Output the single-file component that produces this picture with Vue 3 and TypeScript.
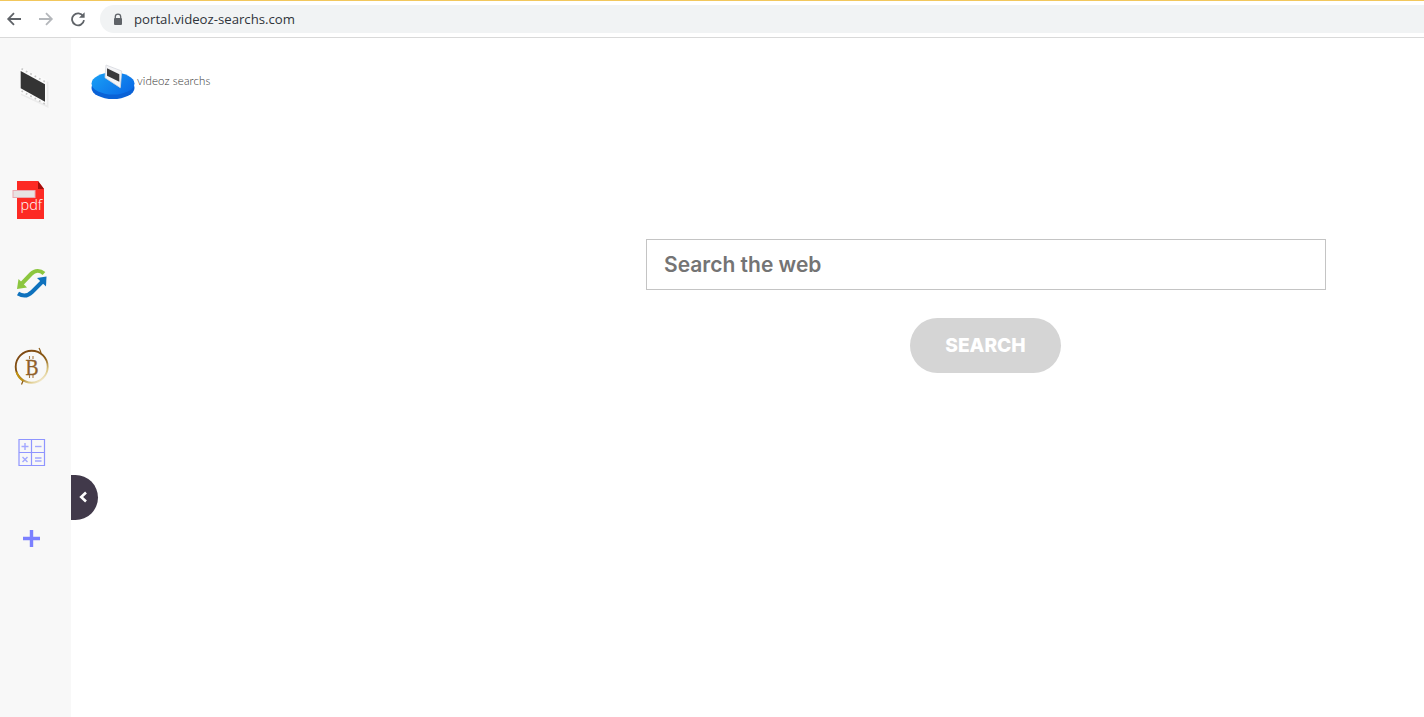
<script setup lang="ts">
import { ref } from 'vue'

const query = ref('')
const calcLines = [
  'M25 443v7M21.500 446.500h7',
  'M35 446.500h6.500',
  'M22.500 457l5 5M27.500 457l-5 5',
  'M35 458h6.500M35 461h6.500',
]
</script>

<template>
  <div class="page">
    <header class="toolbar">
      <button class="nav" aria-label="Back">
        <svg width="16" height="16" viewBox="0 0 16 16"><path d="M15 8H2.500M8 2.200 2.200 8 8 13.800" fill="none" stroke="#5f6368" stroke-width="1.800" /></svg>
      </button>
      <button class="nav" aria-label="Forward">
        <svg width="16" height="16" viewBox="0 0 16 16"><path d="M1 8h12.500M8 2.200 13.800 8 8 13.800" fill="none" stroke="#b4b7bb" stroke-width="1.800" /></svg>
      </button>
      <button class="nav" aria-label="Reload">
        <svg width="16" height="16" viewBox="0 0 16 16"><path d="M13.200 5.200A6 6 0 1 0 14 9.200" fill="none" stroke="#5f6368" stroke-width="1.800" /><path d="M14.600 1.200v5.600H9z" fill="#5f6368" /></svg>
      </button>
      <div class="address">
        <svg width="10" height="13" viewBox="0 0 10 13"><path d="M2.300 5.500V3.800a2.700 2.700 0 0 1 5.400 0v1.700" fill="none" stroke="#5f6368" stroke-width="1.300" /><rect x="1" y="5" width="8" height="7" rx="1" fill="#5f6368" /></svg>
        <span class="url">portal.videoz-searchs.com</span>
      </div>
    </header>

    <div class="body">
      <aside class="sidebar">
        <!-- film strip -->
        <svg class="app film" width="32" height="46" viewBox="18 64 32 46">
          <path d="M21 68 48.500 82v26L21 95z" fill="#ebebeb" />
          <path d="M20 66.700 46.700 80v25L20 93z" fill="#fbfbfb" />
          <path d="M20.700 71 45 84.300v17.400L20.700 88.300z" fill="#343434" />
          <path d="M21.500 68.800 45 81.700M21.500 91 45 104" stroke="#c6c6c6" stroke-width="1.700" stroke-dasharray="1.700 3.300" fill="none" />
        </svg>
        <!-- pdf -->
        <svg class="app pdf" width="36" height="40" viewBox="11 180 36 40">
          <path d="M17 181h21l6 8v30H17z" fill="#fd2a24" />
          <path d="M38 181l6 8h-6z" fill="#a30f0d" />
          <rect x="13" y="190.500" width="22" height="7" fill="#e7e3e3" stroke="#e9aab2" />
          <text x="20.500" y="210" class="pdf-text">pdf</text>
        </svg>
        <!-- exchange arrows -->
        <svg class="app swap" width="32" height="32" viewBox="16 267 32 32">
          <path d="M20.500 285 31 274c4-4 9-4 13-.5" fill="none" stroke="#8cc63f" stroke-width="4" />
          <path d="M17 289l1.500-10 8.500 8.500z" fill="#8cc63f" />
          <path d="M43 281 32 292c-4 4-9 4.500-14 1.500" fill="none" stroke="#0f72bd" stroke-width="4" />
          <path d="M46.500 276.500 46 286.500 37 278z" fill="#0f72bd" />
        </svg>
        <!-- coin -->
        <svg class="app coin" width="36" height="40" viewBox="14 347 36 40">
          <defs>
            <linearGradient id="coinRing" x1="0" y1="0" x2="0.700" y2="1">
              <stop offset="0" stop-color="#7a4312" />
              <stop offset="0.6" stop-color="#8a5a14" />
              <stop offset="0.85" stop-color="#d8c27a" />
              <stop offset="1" stop-color="#f1e7c8" />
            </linearGradient>
          </defs>
          <circle cx="31.700" cy="366.700" r="16" fill="none" stroke="url(#coinRing)" stroke-width="1.900" />
          <path d="M16.500 372a16 16 0 0 0 7 9" fill="none" stroke="#c29412" stroke-width="1.900" />
          <path d="M39 348c1 1.500 1.500 3 2 5M23 381l-1.500 3.500" fill="none" stroke="#8a5a14" stroke-width="1.200" />
          <text class="coin-text" transform="translate(32 375) scale(.85 1)">B</text>
          <path d="M29.500 356v3M33 356v3M29.500 375v3M33 375v3" stroke="#a87a44" stroke-width="1.100" />
        </svg>
        <!-- calculator -->
        <svg class="app calc" width="28" height="28" viewBox="18 439 28 28">
          <path d="M19 439.500h25.500v26H19zM31.500 439.500v26M19 452.500h25.500" fill="none" stroke="#8f95ff" stroke-width="1.200" />
          <path v-for="d in calcLines" :key="d" :d="d" fill="none" stroke="#a3a8ff" stroke-width="1.400" />
        </svg>
        <button class="add" aria-label="Add">
          <svg width="17" height="17" viewBox="0 0 17 17"><path d="M8.500 0v17M0 8.500h17" stroke="#7b80ff" stroke-width="3.400" /></svg>
        </button>
        <button class="collapse" aria-label="Collapse">
          <svg width="9" height="12" viewBox="0 0 9 12"><path d="M7 1.500 2.200 6 7 10.500" fill="none" stroke="#fff" stroke-width="2.600" /></svg>
        </button>
      </aside>

      <main class="main">
        <div class="logo">
          <svg width="47" height="38" viewBox="89 62 47 38">
            <defs>
              <linearGradient id="disc" x1="0" y1="0" x2="1" y2="0.600">
                <stop offset="0" stop-color="#1aa2f6" />
                <stop offset="1" stop-color="#0b6fe8" />
              </linearGradient>
            </defs>
            <ellipse cx="112" cy="88" rx="21.500" ry="11" fill="#0a62d6" />
            <ellipse cx="112" cy="83.500" rx="21.500" ry="11" fill="url(#disc)" />
            <path d="M105 65l15.700 6-1.400 16.700L104 77.700z" fill="#f4f4f6" stroke="#d6d8de" stroke-width="0.800" />
            <path d="M106 68.300l12.300 6v7.400L106 75.700z" fill="#3a3a3c" />
          </svg>
          <span class="brand">videoz searchs</span>
        </div>

        <form class="search" @submit.prevent>
          <input v-model="query" class="field" type="text" placeholder="Search the web" />
          <button class="go" type="submit">SEARCH</button>
        </form>
      </main>
    </div>
  </div>
</template>

<style>
html,
body {
  margin: 0;
  background: #fff;
}
</style>

<style scoped>
.page {
  height: 717px;
  display: flex;
  flex-direction: column;
  overflow: hidden;
  font-family: "Inter", "Liberation Sans", sans-serif;
}
.toolbar {
  height: 36px;
  flex: none;
  display: flex;
  align-items: center;
  border-top: 1px solid #f2c75c;
  border-bottom: 1px solid #d9d9d9;
  padding-left: 6px;
}
.nav {
  width: 32px;
  height: 28px;
  padding: 0;
  border: none;
  background: none;
  display: flex;
  align-items: center;
}
.address {
  flex: 1;
  height: 28px;
  margin-left: -2px;
  margin-right: -20px;
  border-radius: 14px;
  background: #f1f3f4;
  display: flex;
  align-items: center;
  padding-left: 13px;
  gap: 11px;
}
.url {
  font-family: "Open Sans", sans-serif;
  font-size: 13.2px;
  color: #30343a;
}
.body {
  flex: 1;
  display: flex;
}
.sidebar {
  position: relative;
  width: 71px;
  flex: none;
  background: #f8f8f8;
  display: flex;
  flex-direction: column;
  align-items: center;
  padding-top: 26px;
}
.app {
  display: block;
  flex: none;
}
.film {
  margin-left: -3px;
}
.pdf {
  margin-top: 70px;
  margin-left: -13px;
}
.swap {
  margin-top: 47px;
  margin-left: -7px;
}
.coin {
  margin-top: 48px;
  margin-left: -7px;
}
.calc {
  margin-top: 52px;
  margin-left: -7px;
}
.add {
  margin-top: 63px;
  margin-left: -8px;
  padding: 0;
  width: 17px;
  height: 17px;
  border: none;
  background: none;
  display: flex;
}
.collapse {
  position: absolute;
  left: 71px;
  top: 437px;
  width: 27px;
  height: 45px;
  padding: 0 0 2px 8px;
  border: none;
  border-radius: 0 23px 23px 0;
  background: #41394a;
  display: flex;
  align-items: center;
}
.pdf-text {
  font-family: "Open Sans", sans-serif;
  font-weight: 300;
  font-size: 14.5px;
  fill: #fff;
}
.coin-text {
  font-family: "Liberation Serif", serif;
  font-size: 23px;
  text-anchor: middle;
  fill: #8f5f2a;
  stroke: #8f5f2a;
  stroke-width: 0.4px;
}
.main {
  flex: 1;
  padding: 24px 98px 0 19px;
}
.logo {
  display: flex;
  align-items: center;
  height: 38px;
}
.brand {
  font-family: "Lato", sans-serif;
  font-weight: 300;
  font-size: 11.5px;
  letter-spacing: 0.1px;
  color: #333;
  margin-top: -1px;
}
.search {
  margin-top: 139px;
  margin-left: 556px;
  display: flex;
  flex-direction: column;
  align-items: center;
}
.field {
  width: 100%;
  height: 51px;
  box-sizing: border-box;
  border: 1px solid #c4c4c4;
  padding: 0 17px;
  outline: none;
  font-family: inherit;
  font-size: 21px;
  font-weight: 600;
  color: #747474;
}
.field::placeholder {
  color: #747474;
  opacity: 1;
}
.go {
  margin-top: 28px;
  margin-right: 1px;
  width: 151px;
  height: 55px;
  padding: 0 0 1px;
  border: none;
  border-radius: 28px;
  background: #d5d5d5;
  color: #fff;
  font-family: inherit;
  font-size: 19.2px;
  font-weight: 800;
}
</style>
